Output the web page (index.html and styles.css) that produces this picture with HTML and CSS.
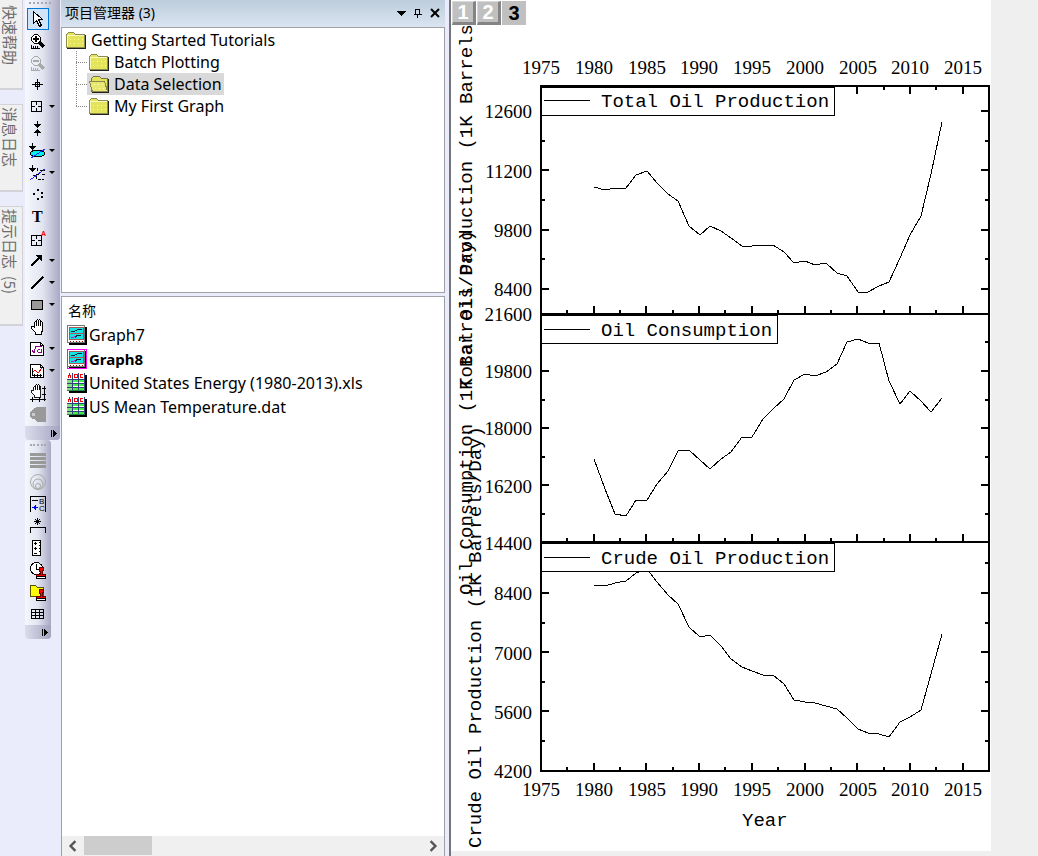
FILE: index.html
```html
<!DOCTYPE html>
<html lang="zh-CN">
<head>
<meta charset="utf-8">
<title>Graph8</title>
<link rel="stylesheet" href="styles.css">
</head>
<body>
<svg class="defs" width="0" height="0" aria-hidden="true">
  <defs>
    <symbol id="folder" viewBox="0 0 20 17">
      <path d="M.5 15.500V2.500L2.500.5H7.500L9.500 2.500H18.500V15.500Z" fill="#e4e45c" stroke="#8c8c50"/>
      <path d="M1.500 14V3.500H18" fill="none" stroke="#fafac0"/>
      <path d="M1 16H19.500V3" fill="none" stroke="#222"/>
      <path d="M4 7h1M8 7h1M12 7h1M16 7h1M4 11h1M8 11h1M12 11h1M16 11h1" stroke="#ffff90"/>
    </symbol>
    <symbol id="folder-open" viewBox="0 0 20 17">
      <path d="M2.500 15.500V2.500L4.500.5H10.500L12.500 2.500H18.500V15.500Z" fill="#e4e45c" stroke="#77774a"/>
      <path d="M3.500 15.500L.5 5.500H15.500L18.500 15.500Z" fill="#e8e870" stroke="#88884c"/>
      <path d="M3 16H19.500V3" fill="none" stroke="#222"/>
      <path d="M5 8h1M9 8h1M13 8h1M6 12h1M10 12h1M14 12h1" stroke="#ffffb0"/>
    </symbol>
    <symbol id="graph" viewBox="0 0 20 20">
      <path d="M2 18.500H18.500V2" fill="none" stroke="#000" stroke-width="3"/>
      <path d="M.5.500H17.500V17.500H.5Z" fill="#fff" stroke="#777"/>
      <path d="M3 2H16V14H3Z" fill="#10e4e4"/>
      <path d="M2.500 15V2.500H16.500V15M3 8.500H16M3 14.500H16" fill="none" stroke="#a55"/>
      <path d="M4 6.500H7L9 5.500L11 4.500H15M8 12.500L10 10.500H14" fill="none" stroke="#123"/>
      <path d="M4 12.500H6L8 11.500" fill="none" stroke="#d0d"/>
      <path d="M3 16.500H16" stroke="#a00" stroke-dasharray="1 2"/>
    </symbol>
    <symbol id="book" viewBox="0 0 20 20">
      <path d="M2 18.500H18.500V2" fill="none" stroke="#000" stroke-width="3"/>
      <path d="M0 0H18V18H0Z" fill="#fff"/>
      <path d="M0 6H5V18H0Z" fill="#80e080"/>
      <path d="M6 7H17V9H6ZM6 11H17V13H6ZM6 15H17V17H6Z" fill="#40f040"/>
      <path d="M5.500 0V18M11.500 0V18M17.500 0V18M0 6.500H18M0 10.500H18M0 14.500H18" stroke="#304080" fill="none"/>
      <path d="M1 4.500L2.500 1.500L4 4.500M7 1.500H10V4.500H7ZM16 1.500H13V4.500H16" stroke="#f00" fill="none"/>
      <path d="M0 17.500H18" stroke="#284"/>
    </symbol>
    <symbol id="stamp" viewBox="0 0 10 12">
      <path d="M3 .5H7V3.500L6 4.500V7.500H9.500V9.500H.5V7.500H4V4.500L3 3.500Z" fill="#f00" stroke="#600"/>
      <path d="M.5 9.500H9.500V11.500H.5Z" fill="#fff" stroke="#000"/>
    </symbol>
    <symbol id="hand" viewBox="0 0 16 16">
      <path d="M5.500 15.500V13.500L1.500 9.500V7.500H3.500L4.500 8.500V3.500L5.500 2.500L6.500 3.500V7V1.500L7.500.5L8.500 1.500V7V1.500L9.500.5L10.500 1.500V7V3.500L11.500 2.500L12.500 3.500V11.500L11.500 13.500V15.500Z" fill="#fff" stroke="#000"/>
    </symbol>
  </defs>
</svg>

<nav class="tabs" aria-label="日志">
  <button class="tab tab-first">快速帮助</button>
  <button class="tab">消息日志</button>
  <button class="tab tab-count">提示日志  (5)</button>
</nav>

<aside class="tools">
  <div class="bar bar-main" role="toolbar" aria-label="工具">
    <div class="grip"></div>
    <button class="tool on" aria-label="指针"><svg viewBox="0 0 22 22"><path d="M6.500 3.500V15.500L9.500 12.500L12.500 18.500L14.500 17.500L11.500 11.500H15.500Z" fill="#fff" stroke="#000"/></svg></button>
    <button class="tool" aria-label="放大"><svg viewBox="0 0 22 22"><path d="M7.500 4.500H10.500L13.500 7.500V10.500L10.500 13.500H7.500L4.500 10.500V7.500Z" fill="#fff" stroke="#000"/><path d="M6 9H12M9 6V12" stroke="#000" stroke-width="2"/><path d="M12 12L17 17" stroke="#000" stroke-width="3"/><path d="M4.500 15V18.500H13M6.500 16V18M8.500 16V18M10.500 16V18" fill="none" stroke="#000"/></svg></button>
    <button class="tool" aria-label="缩小" disabled><svg viewBox="0 0 22 22"><path d="M7.500 4.500H10.500L13.500 7.500V10.500L10.500 13.500H7.500L4.500 10.500V7.500Z" fill="none" stroke="#aaa"/><path d="M6 9H12" stroke="#aaa" stroke-width="2"/><path d="M12 12L17 17" stroke="#aaa" stroke-width="3"/><path d="M4.500 15V18.500H13M6.500 16V18M8.500 16V18M10.500 16V18" fill="none" stroke="#aaa"/></svg></button>
    <button class="tool" aria-label="屏幕读取"><svg viewBox="0 0 22 22"><path d="M5 10.500H16M10.500 5V16M8.500 8.500H12.500V12.500H8.500Z" fill="none" stroke="#000"/></svg></button>
    <button class="tool more" aria-label="数据读取"><svg viewBox="0 0 22 22"><path d="M4.500 5.500H14.500V15.500H4.500ZM9.500 6V9M9.500 12V15M5 10.500H8M11 10.500H14" fill="none" stroke="#000"/></svg></button>
    <button class="tool" aria-label="数据选择"><svg viewBox="0 0 22 22"><path d="M10 3H11V6H14L10.500 10L7 6H10ZM10 18H11V15H14L10.500 11L7 15H10Z"/></svg></button>
    <button class="tool more" aria-label="选择范围"><svg viewBox="0 0 22 22"><path d="M5 3H6V6H9L5.500 10L2 6H5Z"/><ellipse cx="10.500" cy="13.500" rx="7" ry="3.500" fill="#0ee" stroke="#000"/><path d="M4 18L18 9" stroke="#22f"/></svg></button>
    <button class="tool more" aria-label="屏蔽"><svg viewBox="0 0 22 22"><path d="M5 3H6V6H9L5.500 10L2 6H5Z"/><path d="M3 18L18 7" stroke="#22f"/><path d="M10.500 6V9M13 8.500H18M9 12.500H12M15 12.500H18M9.500 14V18M11 17.500H17M6 13.500H8" stroke="#000" stroke-dasharray="3 1"/></svg></button>
    <button class="tool" aria-label="绘制数据"><svg viewBox="0 0 22 22"><path d="M10 5h2v2h-2zM6 9h2v2h-2zM14 8h2v2h-2zM14 12h2v2h-2zM10 14h2v2h-2z"/></svg></button>
    <button class="tool" aria-label="文本"><svg viewBox="0 0 22 22"><text x="5" y="16" class="glyph-t">T</text></svg></button>
    <button class="tool" aria-label="注释"><svg viewBox="0 0 22 22"><path d="M4.500 7.500H14.500V17.500H4.500ZM9.500 8V11M9.500 14V17M5 12.500H8M11 12.500H14" fill="none" stroke="#000"/><text x="14" y="8" class="glyph-a">A</text></svg></button>
    <button class="tool more" aria-label="箭头"><svg viewBox="0 0 22 22"><path d="M4 16L12 8" stroke="#000" stroke-width="2"/><path d="M8 5H15V12L13 10L10 7Z"/></svg></button>
    <button class="tool more" aria-label="直线"><svg viewBox="0 0 22 22"><path d="M4 17L16 5" stroke="#000" stroke-width="2"/></svg></button>
    <button class="tool more" aria-label="矩形"><svg viewBox="0 0 22 22"><path d="M4.500 6.500H15.500V15.500H4.500Z" fill="#999" stroke="#000"/></svg></button>
    <button class="tool" aria-label="平移"><svg viewBox="0 0 22 22"><use href="#hand" x="3" y="3" width="16" height="16"/></svg></button>
    <button class="tool more" aria-label="插入公式"><svg viewBox="0 0 22 22"><path d="M3.500 4.500H13.500L16.500 7.500V17.500H3.500Z" fill="#fff" stroke="#000"/><path d="M13.500 4V7.500H17" fill="none" stroke="#000"/><path d="M5 12L7 15L8.500 8.500H15M14.500 11V15M13 11.500H11.500L10.500 13L11.500 14.500H14" fill="none" stroke="#808"/></svg></button>
    <button class="tool more" aria-label="插入图形"><svg viewBox="0 0 22 22"><path d="M3.500 4.500H13.500L16.500 7.500V17.500H3.500Z" fill="#fff" stroke="#000"/><path d="M13.500 4V7.500H17M5.500 8V15.500H15M7.500 14V17M10.500 14V17M13.500 14V17" fill="none" stroke="#000"/><path d="M6 12L8 10L11 13L15 8" fill="none" stroke="#f00"/></svg></button>
    <button class="tool" aria-label="缩放平移"><svg viewBox="0 0 22 22"><use href="#hand" x="3" y="2" width="14" height="14"/><path d="M17.500 4V19M15 6.500H19M15 12.500H19M3 17.500H19M5.500 15V20M12.500 15V20" stroke="#000"/></svg></button>
    <button class="tool" aria-label="标签" disabled><svg viewBox="0 0 22 22"><path d="M10 3H19V18H10L7 15H5L3 12V8L6 5Z" fill="#999"/><path d="M5 9H8V12H5Z" fill="#ccc"/></svg></button>
    <button class="overflow" aria-label="工具栏选项"><svg viewBox="0 0 8 8"><path d="M1 0H2V7H1ZM3 0L7 3.500L3 7Z"/></svg></button>
  </div>
  <div class="bar bar-side" role="toolbar" aria-label="添加对象">
    <div class="grip"></div>
    <button class="tool" aria-label="图层" disabled><svg viewBox="0 0 22 22"><path d="M3 4H19V7H3ZM3 8H19V11H3ZM3 12H19V15H3ZM3 16H19V19H3Z" fill="#999"/></svg></button>
    <button class="tool" aria-label="气泡刻度" disabled><svg viewBox="0 0 22 22" class="smooth"><g fill="none" stroke="#aaa"><circle cx="11" cy="11" r="7.500"/><circle cx="11" cy="13" r="5"/><circle cx="11" cy="15" r="2.500"/></g></svg></button>
    <button class="tool" aria-label="图例"><svg viewBox="0 0 22 22"><path d="M3.500 19V3.500H18.500V19" fill="none" stroke="#000"/><path d="M5 7.500H11" stroke="#000"/><path d="M5 14.500H11M8 12V17" stroke="#00f"/><path d="M7 13H9V16H7Z" fill="#00f"/><text x="12" y="11" class="glyph-s">B</text><text x="12" y="18" class="glyph-s">C</text></svg></button>
    <button class="tool" aria-label="星号括号"><svg viewBox="0 0 22 22"><path d="M10.500 3V10M7 6.500H14M8 4L13 9M13 4L8 9" stroke="#000"/><path d="M3.500 18V12.500H18.500V18" fill="none" stroke="#000"/></svg></button>
    <button class="tool" aria-label="比例尺"><svg viewBox="0 0 22 22"><path d="M5.500 3.500H13.500V18.500H5.500Z" fill="#fff" stroke="#000"/><path d="M7 6.500H10M8.500 5V8M7 11.500H10M8.500 10V13M7 16.500H10M12 5.500H13M12 8.500H13M12 11.500H13M12 14.500H13" stroke="#000"/></svg></button>
    <button class="tool" aria-label="日期时间"><svg viewBox="0 0 22 22"><circle cx="9.500" cy="9.500" r="6" fill="#fff" stroke="#000"/><path d="M9.500 5V10.500H13" fill="none" stroke="#000"/><use href="#stamp" x="9" y="8" width="10" height="12"/></svg></button>
    <button class="tool" aria-label="项目路径"><svg viewBox="0 0 22 22"><path d="M3.500 15.500V4.500H8.500L10.500 6.500H16.500V15.500Z" fill="#ff0" stroke="#550"/><use href="#stamp" x="9" y="8" width="10" height="12"/></svg></button>
    <button class="tool" aria-label="新建表格"><svg viewBox="0 0 22 22"><path d="M4.500 6.500H16.500V15.500H4.500ZM8.500 6V16M12.500 6V16M4 9.500H17M4 12.500H17" fill="none" stroke="#000"/></svg></button>
    <button class="overflow" aria-label="工具栏选项"><svg viewBox="0 0 8 8"><path d="M1 0H2V7H1ZM3 0L7 3.500L3 7Z"/></svg></button>
  </div>
</aside>

<section class="manager">
  <header class="title">
    <h1>项目管理器 (3)</h1>
    <button aria-label="菜单"><svg viewBox="0 0 10 10"><path d="M0 3H10L5 8Z"/></svg></button>
    <button aria-label="自动隐藏"><svg viewBox="0 0 10 10"><path d="M2.500 6V1.500H6.500V6M1 6.500H9M4.500 7V10M6 1V6" fill="none" stroke="#000"/></svg></button>
    <button aria-label="关闭"><svg viewBox="0 0 10 10" class="smooth"><path d="M1 1L9 9M9 1L1 9" stroke="#000" stroke-width="2"/></svg></button>
  </header>
  <div class="pane tree">
    <div class="node root"><svg><use href="#folder"/></svg><span>Getting Started Tutorials</span></div>
    <ul>
      <li><div class="node"><svg><use href="#folder"/></svg><span>Batch Plotting</span></div></li>
      <li><div class="node selected"><svg><use href="#folder-open"/></svg><span>Data Selection</span></div></li>
      <li><div class="node"><svg><use href="#folder"/></svg><span>My First Graph</span></div></li>
    </ul>
  </div>
  <div class="pane files">
    <h2>名称</h2>
    <ul>
      <li><svg><use href="#graph"/></svg><span>Graph7</span></li>
      <li class="active"><svg><use href="#graph"/></svg><span>Graph8</span></li>
      <li><svg><use href="#book"/></svg><span>United States Energy (1980-2013).xls</span></li>
      <li><svg><use href="#book"/></svg><span>US Mean Temperature.dat</span></li>
    </ul>
    <div class="scroll">
      <button aria-label="向左"><svg viewBox="0 0 10 10" class="smooth"><path d="M7 1L3 5L7 9" fill="none" stroke="#555" stroke-width="2"/></svg></button>
      <div class="track"><div class="thumb"></div></div>
      <button aria-label="向右"><svg viewBox="0 0 10 10" class="smooth"><path d="M3 1L7 5L3 9" fill="none" stroke="#555" stroke-width="2"/></svg></button>
    </div>
  </div>
</section>

<main class="document">
  <div class="page">
    <div class="layers">
      <button>1</button><button>2</button><button class="current">3</button>
    </div>
    <svg class="chart" viewBox="451 25 540 826" role="img" aria-label="Oil production and consumption by year">
      <g class="curve">
        <polyline points="594,187 605,190 615,188 626,188 636,175 647,171 657,183 668,194 678,201 689,226 700,235 710,226 721,231 731,238 742,246 752,246 763,245 773,245 784,252 794,263 805,261 815,265 826,263 837,273 847,276 858,292 868,292 879,286 889,282 900,258 910,235 921,216 931,174 942,122"/>
        <polyline points="594,459 605,489 615,514 626,516 636,500 647,500 657,484 668,471 678,451 689,450 700,460 710,469 721,459 731,452 742,437 752,437 763,419 773,409 784,399 794,380 805,374 815,376 826,372 837,364 847,342 858,339 868,343 879,343 889,381 900,404 910,391 921,401 931,412 942,398"/>
        <polyline points="594,585 605,586 615,583 626,581 636,573 647,569 657,582 668,595 678,604 689,627 700,637 710,635 721,646 731,659 742,667 752,671 763,675 773,675 784,684 794,700 805,702 815,703 826,706 837,709 847,718 858,729 868,733 879,734 889,737 900,722 910,717 921,710 931,674 942,634"/>
      </g>
      <g class="axis">
        <path d="M541 86H989V771H541ZM541 314H989M541 542H989"/>
        <path d="M594 306V314M646 306V314M699 306V314M752 306V314M805 306V314M857 306V314M910 306V314M963 306V314M567 310V314M620 310V314M673 310V314M725 310V314M778 310V314M831 310V314M884 310V314M936 310V314"/>
        <path d="M594 534V542M646 534V542M699 534V542M752 534V542M805 534V542M857 534V542M910 534V542M963 534V542M567 538V542M620 538V542M673 538V542M725 538V542M778 538V542M831 538V542M884 538V542M936 538V542"/>
        <path d="M594 763V771M646 763V771M699 763V771M752 763V771M805 763V771M857 763V771M910 763V771M963 763V771M567 767V771M620 767V771M673 767V771M725 767V771M778 767V771M831 767V771M884 767V771M936 767V771"/>
        <path d="M857 86V94M910 86V94M963 86V94M884 86V90M936 86V90"/>
        <path d="M541 170H549M541 230H549M541 289H549M541 371H549M541 428H549M541 485H549M541 593H549M541 652H549M541 711H549"/>
        <path d="M541 141H545M541 200H545M541 259H545M541 400H545M541 457H545M541 514H545M541 623H545M541 682H545M541 741H545"/>
        <path d="M981 111H989M981 170H989M981 230H989M981 289H989M981 371H989M981 428H989M981 485H989M981 593H989M981 652H989M981 711H989"/>
        <path d="M985 141H989M985 200H989M985 259H989M985 342H989M985 400H989M985 457H989M985 514H989M985 563H989M985 623H989M985 682H989M985 741H989"/>
      </g>
      <g class="legend">
        <path d="M541 87H834.500V115.500H541Z"/><path d="M541 315H777.500V343.500H541Z"/><path d="M541 543H834.500V571.500H541Z"/>
        <path d="M544 100.500H590M544 329.500H590M544 557.500H590"/>
      </g>
      <path class="edge" d="M540 86H835M541 85V772M541 314H835M541 542H835"/>
      <g class="label">
        <text x="601" y="107">Total Oil Production</text>
        <text x="601" y="336">Oil Consumption</text>
        <text x="601" y="564">Crude Oil Production</text>
        <text x="742" y="826">Year</text>
        <text transform="translate(472 389) rotate(-90)">Total Oil Production (1K Barrels</text>
        <text transform="translate(472 595) rotate(-90)">Oil Consumption (1K Barrels/Day)</text>
        <text transform="translate(481 848) rotate(-90)">Crude Oil Production (1K Barrels/Day)</text>
      </g>
      <g class="tick tick-x">
        <text x="541" y="74">1975</text><text x="594" y="74">1980</text><text x="647" y="74">1985</text><text x="699" y="74">1990</text><text x="752" y="74">1995</text><text x="805" y="74">2000</text><text x="858" y="74">2005</text><text x="910" y="74">2010</text><text x="963" y="74">2015</text>
        <text x="541" y="796">1975</text><text x="594" y="796">1980</text><text x="647" y="796">1985</text><text x="699" y="796">1990</text><text x="752" y="796">1995</text><text x="805" y="796">2000</text><text x="858" y="796">2005</text><text x="910" y="796">2010</text><text x="963" y="796">2015</text>
      </g>
      <g class="tick tick-y">
        <text x="532" y="118">12600</text><text x="532" y="178">11200</text><text x="532" y="237">9800</text><text x="532" y="296">8400</text><text x="532" y="321">21600</text><text x="532" y="378">19800</text><text x="532" y="435">18000</text><text x="532" y="493">16200</text><text x="532" y="550">14400</text><text x="532" y="600">8400</text><text x="532" y="660">7000</text><text x="532" y="719">5600</text><text x="532" y="778">4200</text>
      </g>
    </svg>
  </div>
</main>
</body>
</html>
```

FILE: styles.css
```css
* { box-sizing: border-box; }
body {
  margin: 0;
  height: 100vh;
  display: flex;
  overflow: hidden;
  background: #eaecfb;
  color: #000;
  font: 15px/22px "Noto Sans", "Noto Sans CJK SC", sans-serif;
}
button {
  margin: 0;
  padding: 0;
  border: 0;
  background: none;
  color: inherit;
  font: inherit;
}
ul { margin: 0; padding: 0; list-style: none; }
svg { display: block; shape-rendering: crispEdges; }
.smooth { shape-rendering: auto; }
.defs { display: none; }

.tabs {
  flex: none;
  width: 25px;
  display: flex;
  flex-direction: column;
  align-items: flex-start;
  gap: 14px;
}
.tab {
  width: 23px;
  height: 88px;
  padding: 2px 0;
  border: solid #d2d2d8;
  border-width: 1px 1px 2px 0;
  background: #f0f0f0;
  color: #6c6c6c;
  font: 15px/24px "Noto Sans CJK SC", sans-serif;
  writing-mode: vertical-rl;
  text-orientation: sideways;
  text-align: start;
  white-space: pre;
}
.tab-first { height: 90px; border-top: 0; padding-top: 5px; }
.tab-count { height: 120px; }

.tools {
  flex: none;
  width: 36px;
  display: flex;
  flex-direction: column;
  align-items: flex-start;
}
.bar {
  display: flex;
  flex-direction: column;
  align-items: flex-start;
  padding: 0 0 0 2px;
  background: linear-gradient(90deg, #f6f8fe, #e2e4f0 50%, #a9a9c3);
  border-radius: 0 0 4px 4px;
}
.bar-main { width: 35px; }
.bar-side { width: 26px; border-radius: 4px; }
.grip {
  width: 22px;
  height: 2px;
  margin: 2px 2px 4px;
  border-top: 2px dotted #a8a8b4;
}
.bar-side .grip { width: 16px; margin: 4px 3px 3px; }
.tool {
  position: relative;
  width: 22px;
  height: 22px;
}
.tool svg { width: 22px; height: 22px; }
.on { background: #cfe4f6; outline: 1px solid #0078d7; outline-offset: -1px; }
.more::after {
  content: "";
  position: absolute;
  left: 22px;
  top: 9px;
  border: solid transparent;
  border-width: 3px 3px 0;
  border-top-color: #000;
}
.overflow {
  align-self: stretch;
  height: 14px;
  margin-left: -2px;
  padding: 4px 2px 2px 0;
  display: flex;
  justify-content: flex-end;
  border-radius: 0 0 4px 4px;
  background: linear-gradient(90deg, #dcdcec, #a4a4c0);
}
.overflow svg { width: 8px; height: 8px; }
.glyph-t { font: bold 16px "Liberation Serif", serif; }
.glyph-a { font: bold 7px "Liberation Sans", sans-serif; fill: #f00; }
.glyph-s { font: 8px "Liberation Sans", sans-serif; }

.manager {
  flex: none;
  width: 384px;
  display: flex;
  flex-direction: column;
}
.title {
  flex: none;
  height: 27px;
  display: flex;
  align-items: center;
  gap: 6px;
  padding: 0 4px 2px;
  background: linear-gradient(#bccddc, #dbe4f1);
}
.title h1 {
  flex: 1;
  margin: 0;
  font: 14px/24px "Noto Sans", "Noto Sans CJK SC", sans-serif;
}
.title button { width: 11px; }
.title svg { width: 10px; height: 10px; }
.pane { border: 1px solid #a0a0a8; background: #fff; }
.tree {
  flex: none;
  height: 266px;
  padding: 1px 0 0 4px;
  font-size: 16px;
}
.node {
  display: flex;
  align-items: center;
  gap: 5px;
  width: max-content;
  height: 22px;
  padding-right: 2px;
}
.node svg { width: 20px; height: 17px; }
.tree ul { margin-left: 10px; }
.tree li {
  display: flex;
  background:
    repeating-linear-gradient(90deg, #888 0 1px, transparent 1px 2px) 0 11px / 11px 1px no-repeat,
    repeating-linear-gradient(#888 0 1px, transparent 1px 2px) 0 0 / 1px 100% no-repeat;
}
.tree li:last-child {
  background:
    repeating-linear-gradient(90deg, #888 0 1px, transparent 1px 2px) 0 11px / 11px 1px no-repeat,
    repeating-linear-gradient(#888 0 1px, transparent 1px 2px) 0 0 / 1px 11px no-repeat;
}
.tree li .node { margin-left: 11px; padding-left: 2px; }
.selected { background: #d9d9d9; }
.files {
  flex: 1;
  min-height: 0;
  margin-top: 3px;
  border-bottom: 0;
  display: flex;
  flex-direction: column;
}
.files h2 {
  margin: 0;
  padding: 3px 6px 0;
  font: 14px/20px "Noto Sans CJK SC", sans-serif;
}
.files ul { flex: 1; padding: 3px 5px; font-size: 16px; }
.files li {
  display: flex;
  align-items: center;
  gap: 2px;
  height: 24px;
}
.files li svg { width: 20px; height: 20px; }
.files .active { font-size: 15px; font-weight: bold; }
.active svg { outline: 1px solid #f0f; outline-offset: -1px; }
.scroll {
  flex: none;
  height: 20px;
  display: flex;
  background: #f0f0f0;
}
.scroll button { width: 22px; display: grid; place-items: center; }
.scroll svg { width: 12px; height: 12px; }
.track { flex: 1; }
.thumb { width: 20%; height: 19px; background: #cdcdcd; }

.document {
  flex: 1;
  min-width: 0;
  margin-left: 4px;
  border-left: 2px solid #74747c;
  background: #efefef;
}
.page { max-width: 540px; background: #fff; }
.layers { display: flex; gap: 1px; height: 25px; padding: 1px 1px 0; }
.layers button {
  width: 24px;
  height: 24px;
  border: solid;
  border-width: 1px 3px 3px 1px;
  border-color: #d8d8d8 #848484 #848484 #d8d8d8;
  background: #c0c0c0;
  color: #fff;
  font: bold 20px/20px "Liberation Sans", sans-serif;
}
.layers .current { border: 0; color: #000; line-height: 24px; }
.chart { width: 100%; height: auto; }
.curve { fill: none; stroke: #000; }
.axis, .edge { fill: none; stroke: #000; stroke-width: 2px; }
.legend { fill: #fff; stroke: #000; }
.label { font: 19px "Liberation Mono", monospace; }
.tick { font: 19px "Liberation Serif", serif; }
.tick-x { text-anchor: middle; }
.tick-y { text-anchor: end; }
```
